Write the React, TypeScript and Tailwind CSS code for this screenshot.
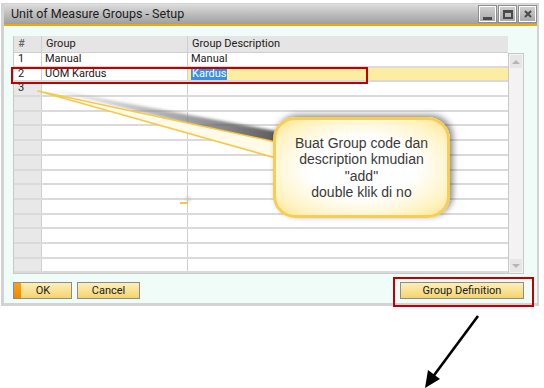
import React from 'react'

const rows = [
  { no: '1', group: 'Manual', desc: 'Manual' },
  { no: '2', group: 'UOM Kardus', desc: 'Kardus' },
  { no: '3', group: '', desc: '' },
  ...Array.from({ length: 12 }, () => ({ no: '', group: '', desc: '' })),
]

function TitleButton({ kind }: { kind: 'min' | 'max' | 'close' }) {
  return (
    <div className="w-[17px] h-[16px] border border-white bg-gradient-to-b from-[#cfcfcf] to-[#a9a9a9] flex items-center justify-center shadow-[0_0_0_1px_#8e8e8e]">
      {kind === 'min' && <div className="w-[9px] h-[3px] bg-[#4a4a4a] mt-[8px]" />}
      {kind === 'max' && <div className="w-[10px] h-[9px] border-2 border-t-[3px] border-[#4a4a4a]" />}
      {kind === 'close' && (
        <svg width="10" height="10" viewBox="0 0 10 10">
          <path d="M2 2L8 8M8 2L2 8" stroke="#4a4a4a" strokeWidth="2" />
        </svg>
      )}
    </div>
  )
}

export default function App() {
  return (
    <div className="w-[544px] h-[388px] bg-white relative overflow-hidden font-['Roboto',sans-serif] text-[11px] text-[#202020]">
      {/* Window */}
      <div className="ml-[1px] mt-[3px] w-[538px] border-t border-l-[3px] border-r-2 border-b-[3px] border-[#d3d3d3]">
        {/* Title bar */}
        <div className="h-[20px] bg-gradient-to-b from-[#dedede] via-[#bdbdbd] to-[#9f9f9f] flex items-center pl-[7px] pr-[1px]">
          <span className="text-[12.5px] text-[#1c1c1c]">Unit of Measure Groups - Setup</span>
          <div className="ml-auto flex gap-[3px]">
            <TitleButton kind="min" />
            <TitleButton kind="max" />
            <TitleButton kind="close" />
          </div>
        </div>
        <div className="h-[2px] bg-[#f5a700]" />

        {/* Body */}
        <div className="h-[277px] bg-[#effcf7] pl-[9px] pr-[13px] pt-[10px] flex flex-col">
          <div className="flex">
            <div className="w-[497px] border-l border-b border-[#c9c9c9]">
              {/* Header */}
              <div className="flex h-[17px] bg-[#e5e5e5] border-b border-[#d0d0d0]">
                <div className="w-[28px] pl-[4px] flex items-center border-r border-[#cfcfcf] text-[#555]">#</div>
                <div className="w-[146px] pl-[4px] flex items-center border-r border-[#cfcfcf]">Group</div>
                <div className="flex-1 pl-[4px] flex items-center">Group Description</div>
              </div>
              {rows.map((r, i) => (
                <div key={i} className="flex h-[14.7px] border-b-2 border-[#dadada]">
                  <div className={`w-[28px] pl-[4px] flex items-center border-r border-[#cfcfcf] ${i < 2 ? 'bg-white' : 'bg-[#e8e8e8]'}`}>
                    {r.no}
                  </div>
                  <div className="w-[146px] pl-[3px] flex items-center border-r border-[#cfcfcf] bg-white">{r.group}</div>
                  <div className={`flex-1 pl-[3px] flex items-center ${i === 1 ? 'bg-[#fdeda2]' : 'bg-white'}`}>
                    {i === 1 ? <span className="bg-[#3a8ee6] text-white px-[1px] leading-[12px]">{r.desc}</span> : r.desc}
                  </div>
                </div>
              ))}
            </div>
            {/* Scrollbar */}
            <div className="w-[16px] mt-[17px] border border-[#c8c8c8] bg-[#f3f3f3] flex flex-col justify-between p-[1px]">
              <div className="h-[13px] bg-[#e6e6e6] flex items-center justify-center">
                <div className="w-0 h-0 border-x-[4px] border-x-transparent border-b-[4px] border-b-[#b5b5b5]" />
              </div>
              <div className="h-[13px] bg-[#e6e6e6] flex items-center justify-center">
                <div className="w-0 h-0 border-x-[4px] border-x-transparent border-t-[4px] border-t-[#b5b5b5]" />
              </div>
            </div>
          </div>

          {/* Buttons */}
          <div className="flex mt-[8px] gap-[5px]">
            <button className="relative w-[59px] h-[17px] border border-[#8c8c8c] bg-gradient-to-b from-[#fcefb8] to-[#f5d46c] flex items-center justify-center">
              <span className="absolute left-0 top-0 bottom-0 w-[7px] bg-gradient-to-b from-[#f7a21b] to-[#ee8a00]" />
              <span className="pl-[1px]">OK</span>
            </button>
            <button className="w-[63px] h-[17px] border border-[#8c8c8c] bg-gradient-to-b from-[#fcefb8] to-[#f5d46c] flex items-center justify-center">
              Cancel
            </button>
            <button className="ml-auto w-[124px] h-[17px] border border-[#8c8c8c] bg-gradient-to-b from-[#fcefb8] to-[#f5d46c] flex items-center justify-center">
              Group Definition
            </button>
          </div>
        </div>
      </div>

      {/* Red highlight boxes */}
      <div className="absolute left-[11px] top-[67px] w-[357px] h-[17px] border-2 border-[#c00000]" />
      <div className="absolute left-[393px] top-[277px] w-[141px] h-[30px] border-2 border-[#c00000]" />

      {/* Callout pointer */}
      <svg className="absolute left-0 top-0" width="544" height="388" viewBox="0 0 544 388">
        <defs>
          <filter id="blur" x="-10%" y="-50%" width="120%" height="200%">
            <feGaussianBlur stdDeviation="1.5" />
          </filter>
          <linearGradient id="shade" x1="0" y1="0" x2="1" y2="0">
            <stop offset="0" stopColor="#c8c8c8" stopOpacity="0.4" />
            <stop offset="1" stopColor="#4a4a4a" stopOpacity="0.9" />
          </linearGradient>
        </defs>
        <polygon points="44,88 276,131 276,146" fill="url(#shade)" filter="url(#blur)" />
        <polygon points="38,91 276,142 276,158" fill="#fffbe8" stroke="#f6c94a" strokeWidth="1.6" strokeLinejoin="round" />
        <line x1="180" y1="203" x2="188" y2="203" stroke="#f6c94a" strokeWidth="2" />
        <circle cx="188" cy="199" r="3" fill="#bbb" opacity="0.5" filter="url(#blur)" />
        {/* Black arrow */}
        <line x1="478" y1="316" x2="432" y2="378" stroke="#000" strokeWidth="2.6" />
        <polygon points="425,388 428,370 440,379" fill="#000" />
      </svg>

      {/* Callout bubble */}
      <div className="absolute left-[273px] top-[117px] w-[177px] h-[101px] rounded-[22px] border-[3px] border-[#f6cd55] bg-[radial-gradient(ellipse_at_center,#ffffff_45%,#fff3c2_80%,#fde28a_100%)] shadow-[3px_-2px_6px_rgba(0,0,0,0.45)] flex items-center justify-center">
        <div className="font-['Liberation_Sans',Arial,sans-serif] text-[14px] leading-[16.5px] text-[#3a3a3a] text-center">
          Buat Group code dan
          <br />
          description kmudian
          <br />
          "add"
          <br />
          double klik di no
        </div>
      </div>
    </div>
  )
}
